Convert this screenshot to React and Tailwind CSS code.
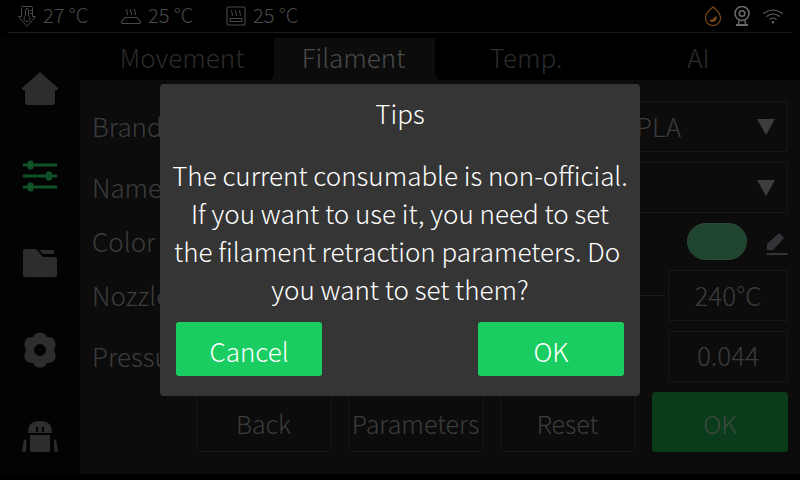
function HomeIcon() {
  return (
    <svg width="40" height="35" viewBox="0 0 40 35">
      <path d="M20 1 L38 17 Q38.500 19 36 19 L35 19 L35 31 Q35 34 32 34 L8 34 Q5 34 5 31 L5 19 L4 19 Q1.500 19 2 17 Z" fill="#2c2d2f" />
    </svg>
  );
}

function SlidersIcon() {
  return (
    <svg width="36" height="32" viewBox="0 0 36 32" fill="#0f5227">
      <rect x="0.500" y="3.500" width="35" height="3" rx="1.500" />
      <rect x="5.500" y="0.500" width="6" height="9" rx="2.500" />
      <rect x="0.500" y="14.500" width="35" height="3" rx="1.500" />
      <rect x="24" y="11.500" width="6" height="9" rx="2.500" />
      <rect x="0.500" y="25.500" width="35" height="3" rx="1.500" />
      <rect x="5.500" y="22.500" width="6" height="9" rx="2.500" />
    </svg>
  );
}

function FolderIcon() {
  return (
    <svg width="36" height="30" viewBox="0 0 36 30">
      <path d="M1 3 Q1 1 3 1 L14 1 L21 9 L34 9 Q35 9 35 11 L35 27 Q35 29 33 29 L3 29 Q1 29 1 27 Z" fill="#2c2d2f" />
      <path d="M17 2 L31 2 Q32 2 32 3 L32 6 L21 6 Z" fill="#2c2d2f" />
    </svg>
  );
}

function GearIcon() {
  return (
    <svg width="36" height="36" viewBox="0 0 36 36">
      <path
        fillRule="evenodd"
        d="M13 2 Q18 -1 23 2 L25 5 Q28 5 31 6 Q35 11 33 15 L32 18 L33 21 Q35 26 31 30 Q28 31 25 31 L23 34 Q18 37 13 34 L11 31 Q8 31 5 30 Q1 26 3 21 L4 18 L3 15 Q1 11 5 6 Q8 5 11 5 Z M18 12 A6 6 0 1 0 18 24 A6 6 0 1 0 18 12 Z"
        fill="#2c2d2f"
      />
    </svg>
  );
}

function RobotIcon() {
  return (
    <svg width="38" height="34" viewBox="0 0 38 34" fill="#2c2d2f">
      <path fillRule="evenodd" d="M7 12 Q7 1 19 1 Q31 1 31 12 L31 13 L7 13 Z M15 7 L15 12 L17 12 L17 7 Z M21 7 L21 12 L23 12 L23 7 Z" />
      <rect x="9" y="15" width="20" height="17" rx="1" />
      <path d="M3 20 Q4 19 5.500 20 L5 31 Q3 33 1 31 Z" />
      <path d="M33 20 Q34 19 35 20 L37 31 Q35 33 33.500 31 Z" />
    </svg>
  );
}

function Caret() {
  return (
    <svg width="20" height="18" viewBox="0 0 20 18">
      <path d="M1 1 L19 1 L10 17 Z" fill="#3c3d3f" />
    </svg>
  );
}

function PenIcon() {
  return (
    <svg className="mt-[6px]" width="22" height="24" viewBox="0 0 22 24" fill="#333437">
      <path d="M1 11 L13 0 L18 5 L7 17 L1 17 Z" />
      <rect x="0.500" y="20" width="21" height="2" />
    </svg>
  );
}

function NozzleIcon() {
  return (
    <svg width="18" height="21" viewBox="0 0 18 21" fill="none" stroke="#48494b" strokeWidth="1">
      <path d="M3.500 10.500 L3.500 1.500 Q3.500 0.500 4.500 0.500 L13.500 0.500 Q14.500 0.500 14.500 1.500 L14.500 10.500 L17.500 10.500 L9 20.500 L0.500 10.500 Z" />
      <path d="M7.500 3.500 Q7.500 2.500 9 2.500 Q10.500 2.500 10.500 3.500 L10.500 10 A3 3 0 1 1 7.500 10 Z" />
      <path d="M12 4.500 H14 M12 7.500 H14" />
    </svg>
  );
}

function BedIcon() {
  return (
    <svg width="20" height="16" viewBox="0 0 20 16" fill="none" stroke="#48494b" strokeWidth="1.100">
      <path d="M6 1 Q5 2.500 6 4 Q7 5.500 6 7 M10 1 Q9 2.500 10 4 Q11 5.500 10 7 M14 1 Q13 2.500 14 4 Q15 5.500 14 7" />
      <path d="M4 9.500 L16 9.500 L19.500 14 Q19.500 15.500 18 15.500 L2 15.500 Q0.500 15.500 0.500 14 Z" />
    </svg>
  );
}

function ChamberIcon() {
  return (
    <svg width="20" height="20" viewBox="0 0 20 20" fill="none" stroke="#48494b" strokeWidth="1.100">
      <rect x="1" y="1" width="18" height="18" rx="1" />
      <path d="M6 4 Q5 5.500 6 7 Q7 8.500 6 10 M10 4 Q9 5.500 10 7 Q11 8.500 10 10 M14 4 Q13 5.500 14 7 Q15 8.500 14 10" strokeWidth="1" />
      <rect x="4" y="12.500" width="12" height="3" rx="1.500" />
    </svg>
  );
}

function DropIcon() {
  return (
    <svg width="16" height="20" viewBox="0 0 16 20" fill="none">
      <path d="M8 1 Q15.500 7 15.500 12 A7.500 7.500 0 0 1 0.500 12 Q0.500 7 8 1 Z" stroke="#7c4a1a" strokeWidth="1.200" />
      <path d="M4 13.500 Q8 14.500 9.500 11 L12 10.500 Q11.500 16.500 6 16 Z" fill="#7c4a1a" />
    </svg>
  );
}

function CameraIcon() {
  return (
    <svg width="16" height="20" viewBox="0 0 16 20" fill="none" stroke="#6a6a6a">
      <circle cx="8" cy="7.500" r="7" strokeWidth="1.600" />
      <circle cx="8" cy="7.500" r="2.800" strokeWidth="1.600" />
      <path d="M2 19 L14 19" strokeWidth="2" />
      <path d="M5 14.500 L4.500 18.500 M11 14.500 L11.500 18.500" strokeWidth="1.500" />
    </svg>
  );
}

function WifiIcon() {
  return (
    <svg width="20" height="15" viewBox="0 0 20 15" fill="none" stroke="#6a6a6a" strokeWidth="1.100">
      <path d="M0.500 4.500 Q10 -2.500 19.500 4.500" />
      <path d="M3.500 7.500 Q10 2.500 16.500 7.500" />
      <path d="M6.500 10.500 Q10 7.500 13.500 10.500" />
      <circle cx="10" cy="13.300" r="1.200" fill="#6a6a6a" stroke="none" />
    </svg>
  );
}

function Temp({ icon, value, className }) {
  return (
    <div className={`flex items-center ${className}`}>
      {icon}
      <span className="ml-[7px] mb-[2px] text-[20px] font-light text-[#4a4a4a]">{value}</span>
    </div>
  );
}

function FieldBox({ children, className }) {
  return (
    <div className={`flex items-center border border-[#171717] ${className}`}>
      {children}
    </div>
  );
}

export default function App() {
  return (
    <div
      className="relative w-[800px] h-[480px] overflow-hidden bg-black leading-none"
      style={{ fontFamily: '"Noto Sans CJK SC", "Noto Sans", sans-serif' }}
    >
      {/* status bar */}
      <div className="h-[33px] mx-[8px] flex items-center border-b border-[#1c1c1c]">
        <Temp className="ml-[10px] w-[103px]" icon={<NozzleIcon />} value="27 °C" />
        <Temp className="w-[105px]" icon={<BedIcon />} value="25 °C" />
        <Temp icon={<ChamberIcon />} value="25 °C" />
        <div className="ml-auto flex items-center gap-[13px] mr-[9px]">
          <DropIcon />
          <CameraIcon />
          <WifiIcon />
        </div>
      </div>

      <div className="flex h-[436px] mt-[5px]">
        {/* sidebar */}
        <div className="w-[80px] bg-[#030303] flex flex-col items-center pt-[7px]">
          <div className="h-[87px] shrink-0 flex items-center"><HomeIcon /></div>
          <div className="h-[87px] shrink-0 flex items-center"><SlidersIcon /></div>
          <div className="h-[87px] shrink-0 flex items-center"><FolderIcon /></div>
          <div className="h-[87px] shrink-0 flex items-center"><GearIcon /></div>
          <div className="h-[87px] shrink-0 flex items-center"><RobotIcon /></div>
        </div>

        <div className="flex-1 flex flex-col bg-[#0c0c0c]">
          {/* tabs */}
          <div className="h-[42px] flex text-[26px] font-light">
            <div className="w-[194px] pl-[10px] pb-[4px] flex items-center justify-center bg-black rounded-br-[6px] text-[#2c2c2c]">
              Movement
            </div>
            <div className="w-[161px] pb-[4px] pr-[2px] flex items-center justify-center rounded-t-[6px] text-[#4a4a4a]">
              Filament
            </div>
            <div className="w-[182px] pb-[4px] flex items-center justify-center bg-black rounded-bl-[6px] text-[#2c2c2c]">
              Temp.
            </div>
            <div className="w-[183px] pr-[20px] pb-[4px] flex items-center justify-center bg-black text-[#2c2c2c]">
              AI
            </div>
          </div>

          {/* panel */}
          <div className="flex-1 pl-[12px] pr-[12px] pt-[21px] text-[26px] text-[#3c3c3c] font-light">
            <div className="h-[51px] flex items-center justify-between">
              <span className="mb-[2px]">Brand</span>
              <FieldBox className="w-[360px] h-[51px] justify-between pr-[11px] pl-[207px]">
                <span className="mb-[2px]">PLA</span>
                <Caret />
              </FieldBox>
            </div>
            <div className="mt-[10px] h-[51px] flex items-center justify-between">
              <span className="mb-[2px]">Name</span>
              <FieldBox className="w-[360px] h-[51px] justify-end pr-[11px]">
                <Caret />
              </FieldBox>
            </div>
            <div className="mt-[10px] h-[37px] flex items-center justify-between">
              <span className="mb-[2px]">Color</span>
              <div className="flex items-center gap-[19px]">
                <div className="w-[60px] h-[37px] rounded-full bg-[#1f4430] border border-[#2a4a38]" />
                <PenIcon />
              </div>
            </div>
            <div className="mt-[10px] h-[51px] flex items-center justify-between">
              <span className="mb-[2px]">Nozzle</span>
              <div className="flex items-center gap-[3px]">
                <div className="w-[25px] h-px bg-[#1c1c1c]" />
                <FieldBox className="w-[120px] h-[51px] pb-[2px] justify-center">240°C</FieldBox>
              </div>
            </div>
            <div className="mt-[10px] h-[51px] flex items-center justify-between">
              <span className="mb-[2px]">Pressure</span>
              <FieldBox className="w-[120px] h-[51px] pb-[3px] justify-center">0.044</FieldBox>
            </div>
            <div className="mt-[10px] flex justify-end gap-[16px] text-[25px]">
              {["Back", "Parameters", "Reset"].map((b) => (
                <div
                  key={b}
                  className="w-[136px] h-[60px] pt-[2px] pr-[1px] flex items-center justify-center rounded-[4px] border border-[#171717]"
                >
                  {b}
                </div>
              ))}
              <div className="w-[136px] h-[60px] pt-[2px] flex items-center justify-center rounded-[4px] bg-[#0a3b1b] text-[#3c4a40]">
                OK
              </div>
            </div>
          </div>
        </div>
      </div>

      {/* tips dialog */}
      <div className="absolute left-[160px] top-[84px] w-[480px] h-[312px] bg-[#353535] rounded-[4px] flex flex-col items-center text-white font-light">
        <div className="mt-[15px] text-[26px] leading-[28px]">Tips</div>
        <div className="mt-[29px] w-[470px] text-center text-[26px] leading-[38px]">
          The current consumable is non-official.
          <br />
          If you want to use it, you need to set
          <br />
          the filament retraction parameters. Do{"\u00a0"}
          <br />
          you want to set them?
        </div>
        <div className="mt-auto mb-[20px] w-full px-[16px] flex justify-between text-[26px]">
          <div className="w-[146px] h-[54px] pt-[3px] flex items-center justify-center rounded-[3px] bg-[#19cd60]">Cancel</div>
          <div className="w-[146px] h-[54px] pt-[3px] flex items-center justify-center rounded-[3px] bg-[#19cd60]">OK</div>
        </div>
      </div>
    </div>
  );
}
